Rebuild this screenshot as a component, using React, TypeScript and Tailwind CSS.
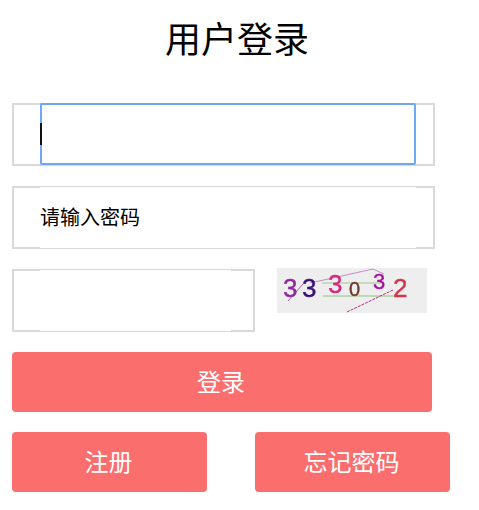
const CJK = 'font-["Noto_Sans_CJK_SC",sans-serif]'

function Captcha() {
  return (
    <svg width="150" height="45" viewBox="0 0 150 45" className="mt-[-1px] ml-[22px] bg-[#eeeeee]">
      <g style={{ filter: 'blur(0.35px)' }}>
        <path d="M33 15 L96 1 L107 6" stroke="#c78ac9" fill="none" />
        <path d="M45 15 H107" stroke="#9cc98f" fill="none" />
        <path d="M46 28 H123" stroke="#8cc47e" fill="none" />
        <path d="M11 33 L26 16" stroke="#a85c9c" fill="none" />
        <path d="M70 44 L116 22" stroke="#b03080" strokeDasharray="3 1" fill="none" />
        <g fontFamily="Liberation Sans, sans-serif" fontSize="26" strokeWidth="0.4">
          <text x="6" y="29" fill="#8e2a9c" stroke="#8e2a9c">3</text>
          <text x="25" y="29" fill="#3a0f78" stroke="#3a0f78">3</text>
          <text x="51" y="25" fill="#d8297c" stroke="#d8297c">3</text>
          <text x="72" y="28" fontSize="20" fill="#6e3a2a" stroke="#6e3a2a">0</text>
          <text x="96" y="21" fontSize="22" fill="#a3109c" stroke="#a3109c">3</text>
          <text x="116" y="29" fill="#d0384a" stroke="#d0384a">2</text>
        </g>
      </g>
    </svg>
  )
}

export default function App() {
  return (
    <div className={`min-h-screen w-[479px] bg-white text-black ${CJK}`}>
      <h1 className="w-[474px] pt-[11px] text-center text-[36px] leading-[52px] font-normal">用户登录</h1>

      <div className="flex flex-col pl-3 pt-[40px]">
        {/* username, focused */}
        <div className="h-[63px] w-[423px] border-2 border-[#d9d9d9]">
          <div className="relative mx-[26px] mt-[-2px] h-[62px] w-[376px] rounded-[2px] border-2 border-[#6ea6f8] bg-white">
            <span className="absolute left-[-2px] top-[18px] h-[22px] w-[2px] bg-[#111111]" />
          </div>
        </div>

        <div className="mt-5 h-[63px] w-[423px] border-2 border-[#d9d9d9]">
          <input
            placeholder="请输入密码"
            className="mx-[26px] mt-[-1px] h-[61px] w-[376px] bg-white pb-[3px] text-[20px] outline-none placeholder:text-black"
          />
        </div>

        {/* captcha row */}
        <div className="mt-5 flex items-start">
          <div className="h-[63px] w-[243px] border-2 border-[#d9d9d9]">
            <input className="mx-[26px] mt-[-1px] h-[61px] w-[191px] bg-white text-[20px] outline-none" />
          </div>
          <Captcha />
        </div>

        <button className="mt-5 h-[60px] w-[420px] rounded bg-[#fb6e6e] pr-[2px] pb-[2px] text-[24px] text-white">登录</button>

        <div className="mt-5 flex gap-12">
          <button className="h-[60px] w-[195px] rounded bg-[#fb6e6e] pr-[2px] pb-[2px] text-[24px] text-white">注册</button>
          <button className="h-[60px] w-[195px] rounded bg-[#fb6e6e] pr-[2px] pb-[2px] text-[24px] text-white">忘记密码</button>
        </div>
      </div>
    </div>
  )
}
